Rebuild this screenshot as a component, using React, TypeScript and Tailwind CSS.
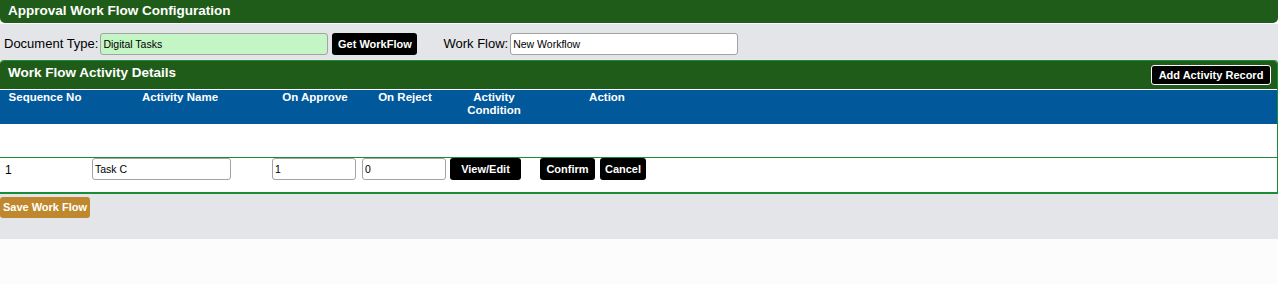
const font = { fontFamily: '"Liberation Sans", Arial, sans-serif' };

const Field = ({ value, className }: { value: string; className: string }) => (
  <input
    readOnly
    value={value}
    className={`h-[22px] rounded-[3px] border border-[#a3a3a3] px-[2px] text-[10.5px] text-black outline-none ${className}`}
  />
);

const BlackButton = ({ label, className = '' }: { label: string; className?: string }) => (
  <button className={`h-[22px] rounded-[3px] bg-black text-[11px] font-bold text-white ${className}`}>{label}</button>
);

export default function App() {
  return (
    <div className="w-[1278px] min-h-[284px] bg-[#fcfcfc]" style={font}>
      <div className="flex h-[23px] items-center rounded-b-[5px] bg-[#1f5c19] pl-2 text-[13.5px] font-bold text-white">
        Approval Work Flow Configuration
      </div>

      <div className="mt-px bg-[#e4e5e8] pb-[21px] pt-[9px]">
        <div className="flex h-[22px] items-center text-[13px] text-black">
          <span className="ml-1">Document Type:</span>
          <Field value="Digital Tasks" className="ml-[2px] w-[228px] bg-[#c4f5c4]" />
          <BlackButton label="Get WorkFlow" className="ml-[4px] w-[85px]" />
          <span className="ml-[26px]">Work Flow:</span>
          <Field value="New Workflow" className="ml-[2px] w-[228px] bg-white" />
        </div>

        <div className="mt-[5px] overflow-hidden rounded-t-[4px] border-r border-t border-b-2 border-[#1a8c36] bg-white">
          <div className="flex h-[28px] items-center justify-between bg-[#1f5c19] pl-2 pr-[6px] text-[13.5px] font-bold text-white">
            <span className="mb-[3px]">Work Flow Activity Details</span>
            <button className="h-[20px] w-[120px] rounded-[3px] border border-white bg-black text-[11px] font-bold text-white">
              Add Activity Record
            </button>
          </div>
          <div className="mt-px flex h-[34px] bg-[#01589a] pt-[1px] text-[11.5px] font-bold leading-[13px] text-white">
            <div className="w-[90px] text-center">Sequence No</div>
            <div className="w-[180px] text-center">Activity Name</div>
            <div className="w-[90px] text-center">On Approve</div>
            <div className="w-[90px] text-center">On Reject</div>
            <div className="w-[88px] text-center">Activity<br />Condition</div>
            <div className="w-[138px] text-center">Action</div>
          </div>
          <div className="h-[34px] border-b border-[#1a8c36]" />
          <div className="flex h-[34px] items-start text-[12px] text-black">
            <div className="w-[92px] pl-[5px] pt-[3px]">1</div>
            <Field value="Task C" className="w-[139px] bg-white" />
            <Field value="1" className="ml-[41px] w-[84px] bg-white" />
            <Field value="0" className="ml-[6px] w-[84px] bg-white" />
            <BlackButton label="View/Edit" className="ml-[4px] w-[71px]" />
            <BlackButton label="Confirm" className="ml-[19px] w-[55px]" />
            <BlackButton label="Cancel" className="ml-[5px] w-[46px]" />
          </div>
        </div>

        <button className="mt-0 h-[21px] w-[90px] rounded-[3px] bg-[#c0882e] text-[11px] font-bold text-white">
          Save Work Flow
        </button>
      </div>
    </div>
  );
}
